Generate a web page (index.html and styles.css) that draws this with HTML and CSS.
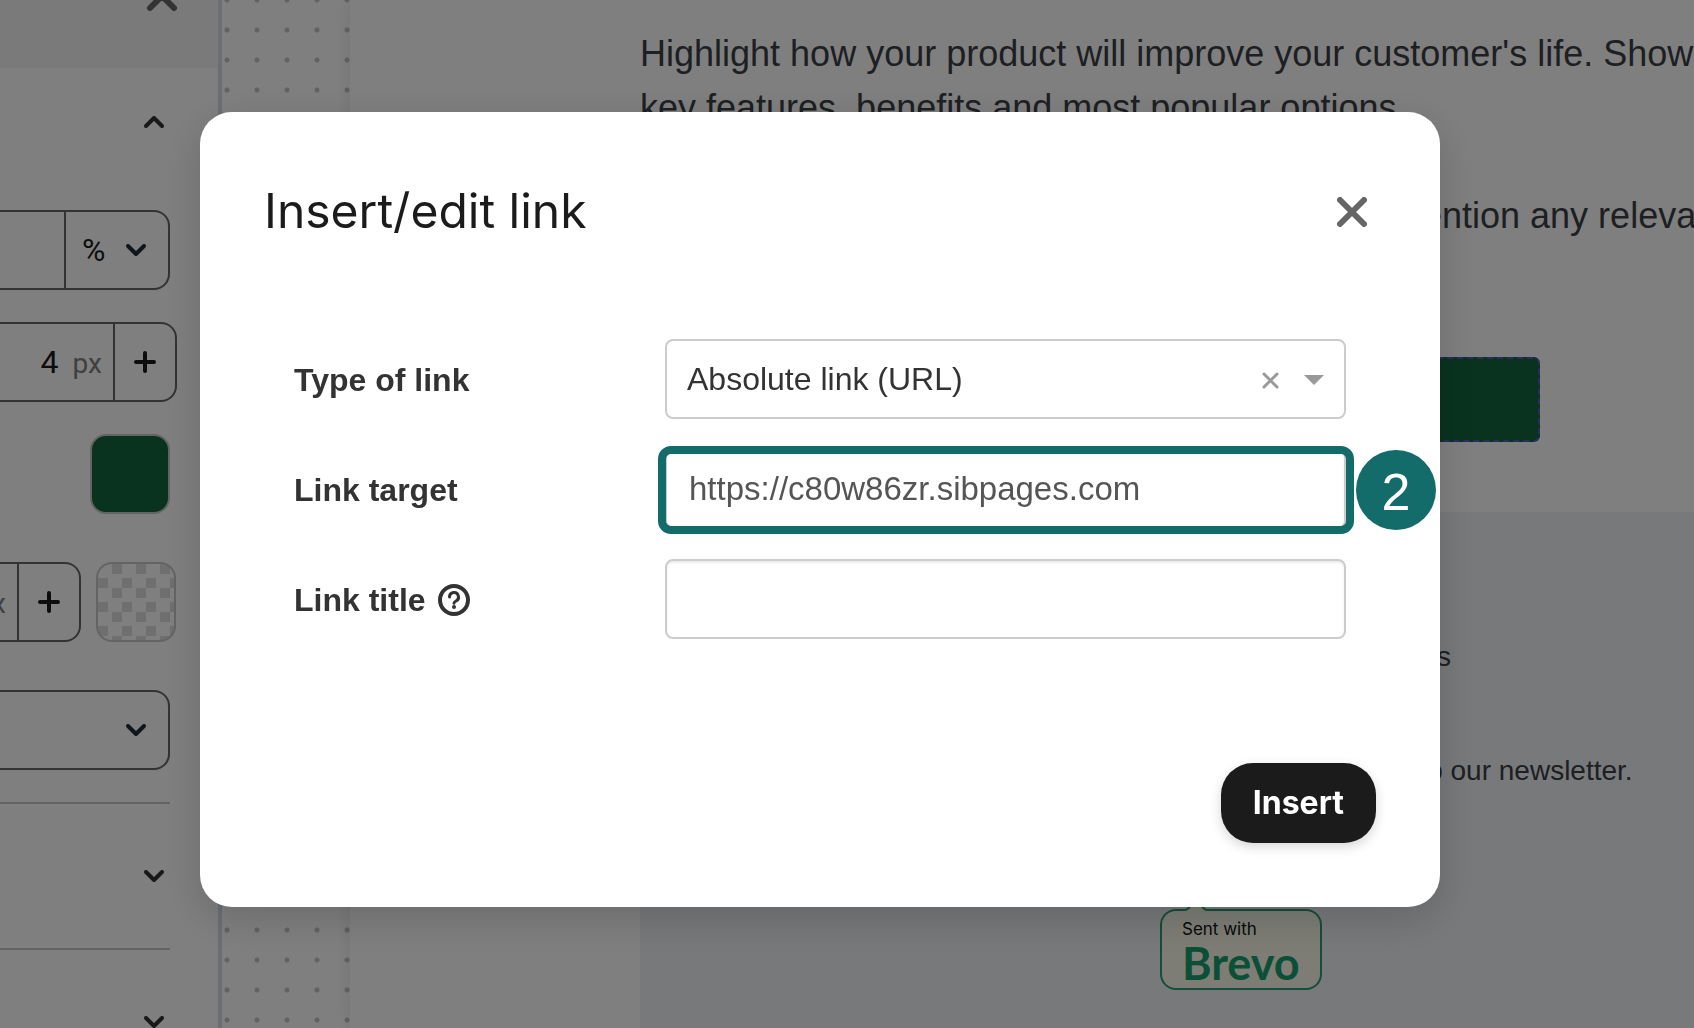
FILE: index.html
```html
<!DOCTYPE html>
<html lang="en">
<head>
<meta charset="utf-8">
<title>Insert/edit link</title>
<link rel="stylesheet" href="styles.css">
</head>
<body>
<svg class="sprite">
  <symbol id="chevron" viewBox="0 0 20 12"><path d="M2 2l8 8 8-8" fill="none" stroke="currentColor" stroke-width="4" stroke-linecap="round" stroke-linejoin="round"/></symbol>
  <symbol id="plus" viewBox="0 0 22 22"><path d="M11 2v18M2 11h18" fill="none" stroke="currentColor" stroke-width="4" stroke-linecap="round"/></symbol>
  <symbol id="cross" viewBox="0 0 30 30"><path d="M3 3l24 24M27 3L3 27" fill="none" stroke="currentColor" stroke-width="6" stroke-linecap="round"/></symbol>
</svg>

<div class="editor">
  <aside class="sidebar">
    <header class="sidebar-header">
      <button class="icon-button" aria-label="Close panel"><svg class="icon-cross"><use href="#cross"/></svg></button>
    </header>
    <div class="sidebar-body">
      <button class="section-toggle first" aria-label="Collapse section"><svg class="icon-chevron up"><use href="#chevron"/></svg></button>
      <div class="controls">
        <div class="field">
          <input class="field-input" aria-label="Width">
          <div class="unit">
            <select aria-label="Width unit"><option>%</option></select>
            <svg class="icon-chevron"><use href="#chevron"/></svg>
          </div>
        </div>
        <div class="field wide">
          <input class="field-input" value="4" aria-label="Radius">
          <span class="suffix">px</span>
          <button class="step" aria-label="Increase radius"><svg class="icon-plus"><use href="#plus"/></svg></button>
        </div>
        <button class="swatch" aria-label="Button color"></button>
      </div>
      <div class="border-row">
        <div class="field">
          <span class="suffix">px</span>
          <button class="step" aria-label="Increase border"><svg class="icon-plus"><use href="#plus"/></svg></button>
        </div>
        <button class="swatch clear" aria-label="Border color"></button>
      </div>
      <div class="field select-field">
        <select aria-label="Style"><option></option></select>
        <svg class="icon-chevron"><use href="#chevron"/></svg>
      </div>
      <button class="section-toggle" aria-label="Expand section"><svg class="icon-chevron"><use href="#chevron"/></svg></button>
      <button class="section-toggle" aria-label="Expand section"><svg class="icon-chevron"><use href="#chevron"/></svg></button>
    </div>
  </aside>

  <main class="canvas">
    <div class="page">
      <div class="email">
        <div class="email-body">
          <p>Highlight how your product will improve your customer's life. Showcase its key features, benefits and most popular options.</p>
          <p class="continued">mention any relevant</p>
          <a class="email-cta" href="#" aria-label="Call to action"></a>
        </div>
        <footer class="email-footer">
          <p class="address">address</p>
          <p>You've received it because you've subscribed to our newsletter.</p>
          <a class="sent-with" href="#">
            <svg class="bubble" viewBox="0 0 162 90"><path d="M16 10h9c5 0 7-9 11-9s6 9 11 9h99a15 15 0 0 1 15 15v49a15 15 0 0 1-15 15H16a15 15 0 0 1-15-15V25a15 15 0 0 1 15-15z" fill="#fafbed" stroke="#2a9c74" stroke-width="2"/></svg>
            <span class="sent-label">Sent with</span>
            <span class="sent-brand">Brevo</span>
          </a>
        </footer>
      </div>
    </div>
  </main>
</div>

<div class="overlay">
  <form class="dialog" role="dialog" aria-labelledby="dialog-title">
    <header class="dialog-header">
      <h1 id="dialog-title">Insert/edit link</h1>
      <button type="button" class="icon-button" aria-label="Close"><svg class="icon-cross"><use href="#cross"/></svg></button>
    </header>
    <div class="form-grid">
      <label for="link-type">Type of link</label>
      <div class="control">
        <select id="link-type"><option>Absolute link (URL)</option></select>
        <div class="select-icons">
          <button type="button" class="clear-button" aria-label="Clear"><svg class="icon-clear" viewBox="0 0 17 17"><path d="M2 2l13 13M15 2L2 15" fill="none" stroke="currentColor" stroke-width="3" stroke-linecap="round"/></svg></button>
          <svg class="icon-caret" viewBox="0 0 20 10"><path d="M0 0h20L10 10z" fill="currentColor"/></svg>
        </div>
      </div>
      <label for="link-target">Link target</label>
      <div class="control">
        <input id="link-target" type="text" value="https://c80w86zr.sibpages.com">
        <span class="highlight"></span>
        <span class="step-badge">2</span>
      </div>
      <label for="link-title">Link title
        <svg class="icon-help" viewBox="0 0 32 32"><circle cx="16" cy="16" r="14" fill="none" stroke="currentColor" stroke-width="4"/><path d="M11.500 13a4.500 4.500 0 1 1 6.500 4c-1.300.7-2 1.200-2 2.300" fill="none" stroke="currentColor" stroke-width="3" stroke-linecap="round"/><circle cx="16" cy="23" r="2" fill="currentColor"/></svg>
      </label>
      <div class="control"><input id="link-title" type="text"></div>
    </div>
    <footer class="dialog-footer"><button type="button" class="primary">Insert</button></footer>
  </form>
</div>
</body>
</html>
```
FILE: styles.css
```css
* { box-sizing: border-box; }

body {
  margin: 0;
  height: 100vh;
  overflow: hidden;
  background: #fff;
  color: #333;
  font-family: "Liberation Sans", Arial, sans-serif;
}

p, h1 { margin: 0; }
svg { display: block; flex: none; }
.sprite { display: none; }

button {
  padding: 0;
  border: 0;
  background: none;
  color: inherit;
  cursor: pointer;
}

input, select {
  font: inherit;
  color: inherit;
  border: 0;
  outline: 0;
  background: none;
  appearance: none;
}

.icon-chevron { width: 20px; height: 12px; }
.icon-chevron.up { transform: rotate(180deg); }
.icon-plus { width: 22px; height: 22px; }
.icon-cross { width: 30px; height: 30px; }
.icon-clear { width: 17px; height: 17px; }
.icon-caret { width: 20px; height: 10px; }
.icon-help { width: 32px; height: 32px; }

.icon-button {
  display: flex;
  align-items: center;
  justify-content: center;
  width: 48px;
  height: 48px;
  color: #666;
}

/* Editor behind the dialog */
.editor {
  display: flex;
  height: 100vh;
  overflow: hidden;
}

.sidebar {
  flex: none;
  width: 222px;
  overflow: hidden;
  border-right: 4px solid #d2dfe8;
  font-family: Roboto, sans-serif;
  font-size: 32px;
  color: #1b1b1b;
}

/* Panel is scrolled, its header partly out of view */
.sidebar-header {
  display: flex;
  align-items: center;
  justify-content: flex-end;
  height: 144px;
  margin-top: -76px;
  padding-right: 32px;
  background: #f5f5f5;
}

.sidebar-body {
  display: flex;
  flex-direction: column;
  padding-right: 48px;
}

.section-toggle {
  display: flex;
  flex: none;
  align-items: center;
  justify-content: flex-end;
  height: 146px;
  padding-right: 6px;
  border-top: 2px solid #c8c8c8;
  color: #333;
}

.section-toggle.first {
  height: 108px;
  margin-bottom: 34px;
  border-top: 0;
}

.controls {
  display: flex;
  flex-direction: column;
  align-items: flex-end;
  gap: 32px;
  margin-bottom: 48px;
}

.field {
  display: flex;
  align-items: center;
  justify-content: flex-end;
  width: 100%;
  height: 80px;
  overflow: hidden;
  border: 2px solid #666;
  border-left: 0;
  border-radius: 0 16px 16px 0;
}

.field.wide {
  width: auto;
  align-self: stretch;
  margin-right: -7px;
}

.field-input {
  flex: 1;
  min-width: 0;
  text-align: right;
}

.suffix {
  margin: 2px 11px 0 12px;
  font-size: 28px;
  color: #808080;
}

.unit {
  display: flex;
  align-items: center;
  width: 104px;
  height: 100%;
  padding: 0 22px 0 16px;
  border-left: 2px solid #666;
}

.unit select { flex: 1; min-width: 0; padding: 0; }
.unit .icon-chevron, .select-field .icon-chevron { color: #1f2d3d; }

.step {
  display: flex;
  flex: none;
  align-items: center;
  justify-content: center;
  width: 62px;
  height: 100%;
  border-left: 2px solid #666;
}

.swatch {
  flex: none;
  width: 80px;
  height: 80px;
  border: 2px solid #c8c8c8;
  border-radius: 16px;
  background: #12663f;
}

.swatch.clear {
  background:
    conic-gradient(at 14px 10px, #dfdfdf 25%, transparent 0) 0 0 / 24px 24px,
    conic-gradient(from 180deg at 10px 14px, #dfdfdf 25%, transparent 0) 0 0 / 24px 24px;
}

.border-row {
  display: flex;
  gap: 15px;
  margin: 0 -6px 48px 0;
}

.border-row .field { flex: 1; min-width: 0; }
.select-field { margin-bottom: 32px; padding-right: 22px; }
.select-field select { flex: 1; min-width: 0; }

.canvas {
  display: flex;
  flex: 1;
  min-width: 0;
  padding-left: 128px;
  background: radial-gradient(circle at 5px 15px, #c4c4c4 2px, transparent 3px) 0 -15px / 30px 30px;
}

.page {
  flex: 1;
  min-width: 0;
  padding-left: 290px;
  background: #fff;
  box-shadow: 0 0 16px rgba(0, 0, 0, 0.1);
}

.email {
  display: flex;
  flex-direction: column;
  width: 1202px;
  height: 100%;
  color: #3b3f44;
}

.email-body {
  padding: 27px 0 70px;
  font-size: 36px;
  line-height: 54px;
}

.continued { padding: 54px 0 114px 752px; }

.email-cta {
  display: block;
  width: 598px;
  height: 85px;
  margin: 0 auto;
  border: 2px dashed #5c54c8;
  border-radius: 6px;
  background: #12663f;
}

.email-footer {
  display: flex;
  flex: 1;
  flex-direction: column;
  align-items: center;
  padding-top: 124px;
  background: #eff2f7;
  font-size: 28px;
  line-height: 42px;
}

.address {
  width: 420px;
  margin-bottom: 72px;
  text-align: right;
}

.sent-with {
  position: relative;
  display: flex;
  flex-direction: column;
  width: 162px;
  height: 90px;
  margin-top: 108px;
  padding: 19px 0 0 22px;
  text-decoration: none;
}

.bubble {
  position: absolute;
  inset: 0;
  width: 162px;
  height: 90px;
}

.sent-label {
  position: relative;
  font: 17px/20px Inter, sans-serif;
  color: #111;
}

.sent-brand {
  position: relative;
  font: 700 45px/48px Lato, sans-serif;
  color: #16a06c;
}

/* Dialog */
.overlay {
  position: fixed;
  inset: 0;
  display: flex;
  align-items: flex-start;
  padding: 112px 254px 0 200px;
  background: rgba(0, 0, 0, 0.5);
}

.dialog {
  flex: 1;
  min-width: 0;
  padding: 64px;
  border-radius: 32px;
  background: #fff;
  box-shadow: 0 12px 40px rgba(0, 0, 0, 0.16);
  font-size: 32px;
}

.dialog-header {
  display: flex;
  align-items: center;
  justify-content: space-between;
  height: 72px;
  margin-bottom: 91px;
}

.dialog-header h1 {
  font: 400 48px/68px Inter, sans-serif;
  padding-bottom: 2px;
  color: #1b1b1b;
}

.form-grid {
  display: grid;
  grid-template-columns: 371px 1fr;
  row-gap: 30px;
  align-items: center;
  padding: 0 30px;
}

.form-grid label {
  display: flex;
  align-items: center;
  gap: 12px;
  padding-top: 2px;
  font-weight: 700;
}

.control { position: relative; }

.control input, .control select {
  display: block;
  width: 100%;
  height: 80px;
  padding: 0 22px;
  border: 2px solid #ccc;
  border-radius: 8px;
}

.control select { padding: 0 20px; }

.control input {
  color: #555;
  font-size: 33px;
  box-shadow: inset 0 2px 2px rgba(0, 0, 0, 0.08);
}

.select-icons {
  position: absolute;
  top: 2px;
  right: 22px;
  bottom: 0;
  display: flex;
  align-items: center;
  gap: 25px;
  color: #999;
}

.highlight {
  position: absolute;
  inset: -3px -8px -5px -7px;
  border: 8px solid #136b6a;
  border-radius: 13px;
  pointer-events: none;
}

.step-badge {
  position: absolute;
  top: 1px;
  right: -90px;
  width: 80px;
  height: 80px;
  border-radius: 50%;
  background: #136b6a;
  color: #fff;
  font-size: 52px;
  line-height: 84px;
  text-align: center;
}

.dialog-footer {
  display: flex;
  justify-content: flex-end;
  margin-top: 124px;
}

.primary {
  height: 80px;
  padding: 0 32px;
  border-radius: 32px;
  background: #1b1b1b;
  box-shadow: 0 4px 12px rgba(0, 0, 0, 0.16);
  color: #fff;
  font: 700 32px/48px Inter, sans-serif;
}
```
